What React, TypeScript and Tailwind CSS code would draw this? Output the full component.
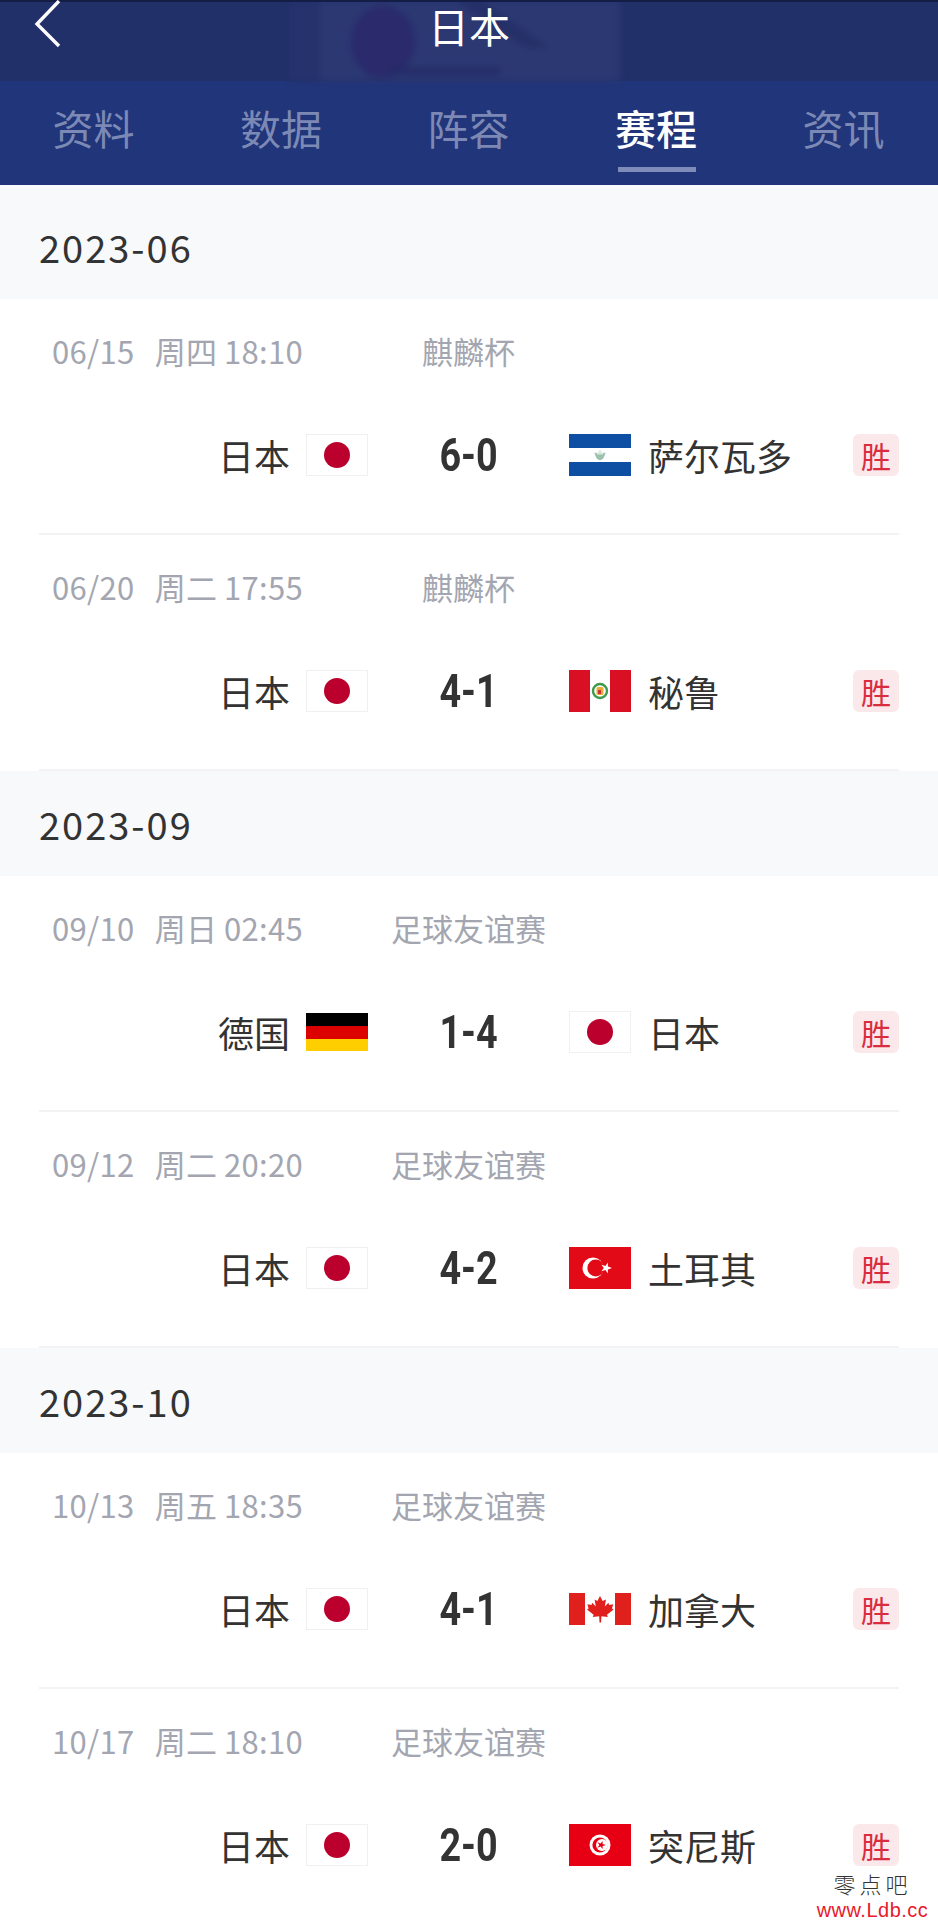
import React from "react";

const CJK = "font-['Noto_Sans_CJK_SC','Noto_Sans',sans-serif]";

function Japan() {
  return (
    <svg width="62" height="42" viewBox="0 0 62 42" className="block">
      <rect x="0.5" y="0.5" width="61" height="41" fill="#fff" stroke="#f0f0f0" />
      <circle cx="31" cy="21" r="13" fill="#bc002d" />
    </svg>
  );
}
function Salvador() {
  return (
    <svg width="62" height="42" viewBox="0 0 62 42" className="block">
      <rect width="62" height="42" fill="#fff" />
      <rect width="62" height="14" fill="#0f4fa3" />
      <rect y="28" width="62" height="14" fill="#0f4fa3" />
      <path d="M25.5 18.5c1 5 3 7.5 5.5 7.5s4.500-2.500 5.500-7.500l-5.500 1.500z" fill="#9cc2ad" />
      <path d="M31 15.500l3.500 5h-7z" fill="#dfe9e0" />
    </svg>
  );
}
function Peru() {
  return (
    <svg width="62" height="42" viewBox="0 0 62 42" className="block">
      <rect width="62" height="42" fill="#fff" />
      <rect width="21" height="42" fill="#d91023" />
      <rect x="41" width="21" height="42" fill="#d91023" />
      <circle cx="31" cy="21" r="7" fill="none" stroke="#3f9a4b" strokeWidth="2.4" />
      <rect x="27.500" y="17" width="7" height="8" rx="1.500" fill="#e9a93a" />
      <rect x="29" y="20" width="3" height="4" fill="#c9362c" />
    </svg>
  );
}
function Germany() {
  return (
    <svg width="62" height="38" viewBox="0 0 62 38" className="block">
      <rect width="62" height="13" fill="#000" />
      <rect y="13" width="62" height="13" fill="#dd0000" />
      <rect y="26" width="62" height="12" fill="#ffce00" />
    </svg>
  );
}
function Turkey() {
  return (
    <svg width="62" height="42" viewBox="0 0 62 42" className="block">
      <rect width="62" height="42" fill="#e30a17" />
      <circle cx="24" cy="21" r="10.500" fill="#fff" />
      <circle cx="26.800" cy="21" r="8.400" fill="#e30a17" />
      <polygon points="43,21 38.900,22.400 38.900,26.400 36.400,23 32.400,24.200 34.800,21 32.400,17.800 36.400,19 38.900,15.600 38.900,19.600" fill="#fff" />
    </svg>
  );
}
function Canada() {
  return (
    <svg width="62" height="32" viewBox="0 0 62 32" className="block">
      <rect width="62" height="32" fill="#fff" />
      <rect width="16" height="32" fill="#e0201c" />
      <rect x="46" width="16" height="32" fill="#e0201c" />
      <path
        d="M31 3l-2.600 5-2.800-1.400 1.200 7-3.600-3.800-.7 2.200-4.100-.7 1.200 4.200-1.600.9 6.600 5.300-.8 2.400 6.400-.9.3 6.300h1.600l.3-6.300 6.400.9-.8-2.400 6.600-5.300-1.600-.9 1.200-4.200-4.100.7-.7-2.200-3.600 3.800 1.200-7L33.600 8z"
        fill="#e0201c"
      />
    </svg>
  );
}
function Tunisia() {
  return (
    <svg width="62" height="42" viewBox="0 0 62 42" className="block">
      <rect width="62" height="42" fill="#e70013" />
      <circle cx="31" cy="21" r="10.500" fill="#fff" />
      <circle cx="31" cy="21" r="7.600" fill="#e70013" />
      <circle cx="33" cy="21" r="6" fill="#fff" />
      <polygon points="37,21 33.600,22.100 33.600,25 31.600,22.600 28.400,23.700 30.400,21 28.400,18.300 31.600,19.400 33.600,17 33.600,19.900" fill="#e70013" />
    </svg>
  );
}

type Match = {
  date: string;
  league: string;
  home: string;
  homeFlag: React.ReactNode;
  score: string;
  away: string;
  awayFlag: React.ReactNode;
};

function Row({ m, last }: { m: Match; last?: boolean }) {
  return (
    <div className={"mx-[39px] flex flex-col " + (last ? "h-[231px]" : "h-[236px] border-b-2 border-[#f3f3f5]")}>
      <div className="mt-[31px] grid h-[42px] grid-cols-[329px_201px_1fr] items-center text-[31px] text-[#a3a6b0]">
        <div className="whitespace-pre pl-[13px] leading-[42px] tracking-[0.3px] [word-spacing:-0.5px]">{m.date}</div>
        <div className="whitespace-nowrap text-center leading-[42px]">{m.league}</div>
      </div>
      <div className="mt-[62px] grid h-[42px] grid-cols-[329px_201px_1fr] items-center">
        <div className="flex items-center justify-end gap-[16px] text-[36px] text-[#333]">
          <span className="whitespace-nowrap leading-[42px]">{m.home}</span>
          {m.homeFlag}
        </div>
        <div className="text-center font-['Roboto','Liberation_Sans',sans-serif] text-[46px] font-bold leading-[42px] text-[#333]">
          <span className="inline-block scale-x-[0.82]">{m.score}</span>
        </div>
        <div className="flex items-center justify-between">
          <div className="flex items-center gap-[17px] text-[36px] text-[#333]">
            {m.awayFlag}
            <span className="whitespace-nowrap leading-[42px]">{m.away}</span>
          </div>
          <div className="flex h-[42px] w-[46px] items-center justify-center rounded-[6px] bg-[#fbe8ea] text-[30px] text-[#d92c3f]">
            胜
          </div>
        </div>
      </div>
    </div>
  );
}

function Section({ title, first, children }: { title: string; first?: boolean; children: React.ReactNode }) {
  return (
    <div>
      <div className={"flex items-center bg-[#f8f9fb] pl-[39px] text-[38px] tracking-[2px] text-[#333] " + (first ? "h-[114px] pt-[9px]" : "h-[105px]")}>
        {title}
      </div>
      {children}
    </div>
  );
}

export default function App() {
  const tabs = ["资料", "数据", "阵容", "赛程", "资讯"];
  return (
    <div className={"relative h-[1920px] w-[938px] overflow-hidden bg-white " + CJK}>
      <div className="relative h-[81px] bg-[#22306a]">
        <svg width="400" height="81" viewBox="0 0 400 81" className="absolute left-[280px] top-0 blur-[3px]">
          <rect x="40" y="0" width="300" height="81" fill="#2b3872" />
          <rect x="10" y="0" width="30" height="81" fill="#25326c" />
          <ellipse cx="103" cy="42" rx="32" ry="36" fill="#2a2a6c" />
          <path d="M200 0l70 48h-24L175 0z" fill="#253068" />
          <rect x="110" y="68" width="110" height="6" fill="#232a66" />
        </svg>
        <div className="absolute left-0 right-0 top-0 h-[2px] bg-[#141d45]" />
        <svg width="30" height="50" viewBox="0 0 30 50" className="absolute left-[33px] top-0">
          <path d="M26 1L4 24l22 22" fill="none" stroke="#fff" strokeWidth="3.400" />
        </svg>
        <div className="relative flex h-[50px] items-center justify-center text-[41px] leading-[50px] text-white">日本</div>
      </div>
      <div className="flex h-[104px] items-start justify-between bg-[#21357a] pl-[53px] pr-[54px]">
        {tabs.map((t, i) => (
          <div key={t} className="relative flex h-[104px] w-[81px] justify-center pt-[21px]">
            <span className={"whitespace-nowrap text-[41px] leading-[50px] " + (i === 3 ? "font-medium text-white" : "text-[#7d89b5]")}>{t}</span>
            {i === 3 && <div className="absolute bottom-[13px] left-[2px] right-[1px] h-[5px] bg-[#7f8bb9]" />}
          </div>
        ))}
      </div>

      <Section title="2023-06" first>
        <Row m={{ date: "06/15   周四 18:10", league: "麒麟杯", home: "日本", homeFlag: <Japan />, score: "6-0", away: "萨尔瓦多", awayFlag: <Salvador /> }} />
        <Row m={{ date: "06/20   周二 17:55", league: "麒麟杯", home: "日本", homeFlag: <Japan />, score: "4-1", away: "秘鲁", awayFlag: <Peru /> }} />
      </Section>
      <Section title="2023-09">
        <Row m={{ date: "09/10   周日 02:45", league: "足球友谊赛", home: "德国", homeFlag: <Germany />, score: "1-4", away: "日本", awayFlag: <Japan /> }} />
        <Row m={{ date: "09/12   周二 20:20", league: "足球友谊赛", home: "日本", homeFlag: <Japan />, score: "4-2", away: "土耳其", awayFlag: <Turkey /> }} />
      </Section>
      <Section title="2023-10">
        <Row m={{ date: "10/13   周五 18:35", league: "足球友谊赛", home: "日本", homeFlag: <Japan />, score: "4-1", away: "加拿大", awayFlag: <Canada /> }} />
        <Row last m={{ date: "10/17   周二 18:10", league: "足球友谊赛", home: "日本", homeFlag: <Japan />, score: "2-0", away: "突尼斯", awayFlag: <Tunisia /> }} />
      </Section>

      <div className="absolute left-[817px] top-[1870px] flex w-[111px] flex-col items-center">
        <div className="font-['Noto_Sans_CJK_SC',serif] text-[22px] font-light leading-[26px] tracking-[4px] text-[#333]">零点吧</div>
        <div className="mt-[3px] font-['Liberation_Sans',sans-serif] text-[20px] leading-[22px] tracking-[0.5px] text-[#e8192c]">www.Ldb.cc</div>
      </div>
    </div>
  );
}
